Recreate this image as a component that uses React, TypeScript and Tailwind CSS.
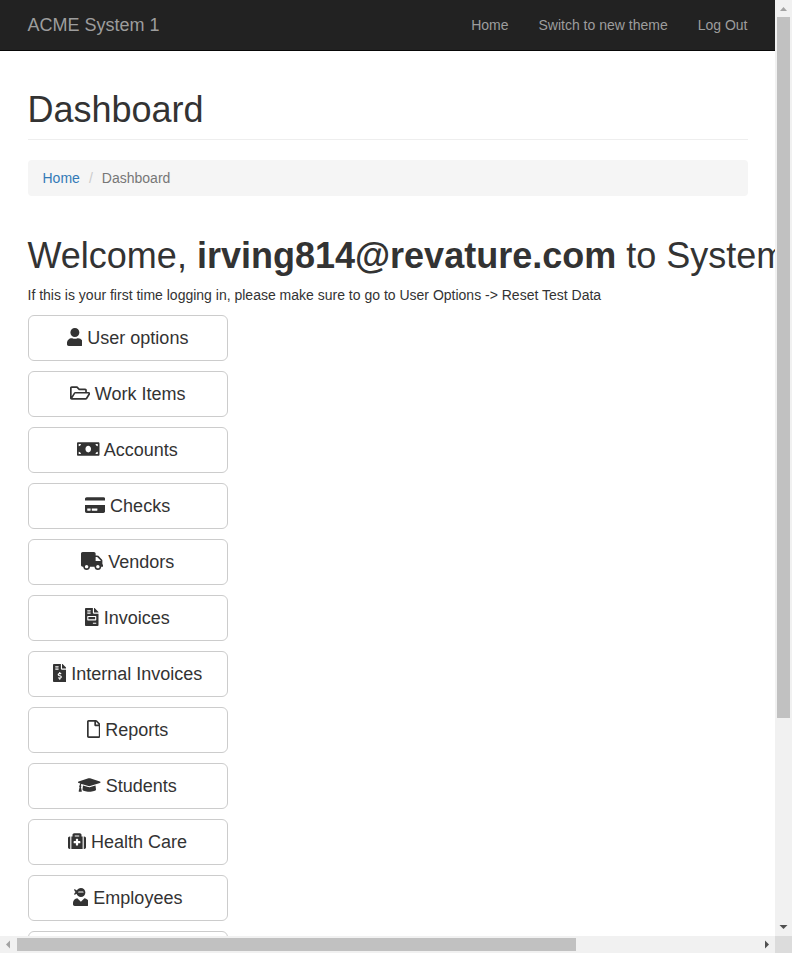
import type { IconType } from "react-icons";
import {
  FaUser,
  FaRegFolderOpen,
  FaMoneyBill,
  FaCreditCard,
  FaTruck,
  FaFileInvoice,
  FaFileInvoiceDollar,
  FaRegFile,
  FaGraduationCap,
  FaMedkit,
  FaUserNinja,
} from "react-icons/fa";

const items: { label: string; icon: IconType; width: string }[] = [
  { label: "User options", icon: FaUser, width: "w-[15.75px]" },
  { label: "Work Items", icon: FaRegFolderOpen, width: "w-[20.25px]" },
  { label: "Accounts", icon: FaMoneyBill, width: "w-[22.5px]" },
  { label: "Checks", icon: FaCreditCard, width: "w-[20.25px]" },
  { label: "Vendors", icon: FaTruck, width: "w-[22.5px]" },
  { label: "Invoices", icon: FaFileInvoice, width: "w-[13.5px]" },
  { label: "Internal Invoices", icon: FaFileInvoiceDollar, width: "w-[13.5px]" },
  { label: "Reports", icon: FaRegFile, width: "w-[13.5px]" },
  { label: "Students", icon: FaGraduationCap, width: "w-[22.5px]" },
  { label: "Health Care", icon: FaMedkit, width: "w-[18px]" },
  { label: "Employees", icon: FaUserNinja, width: "w-[15.75px]" },
];

function Navbar() {
  return (
    <nav className="flex h-[51px] shrink-0 items-center justify-between border-b border-[#080808] bg-[#222] px-[27.5px] text-[#9d9d9d]">
      <a className="text-lg leading-5">ACME System 1</a>
      <div className="flex gap-[30px] leading-5">
        <a>Home</a>
        <a>Switch to new theme</a>
        <a>Log Out</a>
      </div>
    </nav>
  );
}

function VerticalScrollbar() {
  return (
    <div className="flex w-[17px] shrink-0 flex-col items-center bg-[#f1f1f1]">
      <svg className="h-[17px] w-[17px] shrink-0" viewBox="0 0 17 17">
        <path d="M5 11h7L8.500 7z" fill="#a3a3a3" />
      </svg>
      <div className="h-[701px] w-[13px] bg-[#c1c1c1]" />
      <svg className="mt-auto h-[17px] w-[17px] shrink-0" viewBox="0 0 17 17">
        <path d="M4.500 6h8L8.500 10z" fill="#505050" />
      </svg>
    </div>
  );
}

function HorizontalScrollbar() {
  return (
    <div className="flex h-[17px] shrink-0">
      <div className="flex flex-1 items-center bg-[#f1f1f1]">
        <svg className="h-[17px] w-[17px] shrink-0" viewBox="0 0 17 17">
          <path d="M10 4.500v8L6 8.500z" fill="#a3a3a3" />
        </svg>
        <div className="h-[13px] w-[559px] bg-[#c1c1c1]" />
        <svg className="ml-auto h-[17px] w-[17px] shrink-0" viewBox="0 0 17 17">
          <path d="M7 4.500v8L11 8.500z" fill="#505050" />
        </svg>
      </div>
      <div className="w-[17px] bg-[#dcdcdc]" />
    </div>
  );
}

export default function App() {
  return (
    <div className="flex h-[953px] w-[792px] flex-col overflow-hidden bg-white font-['Liberation_Sans',Arial,sans-serif] text-sm leading-5 text-[#333]">
      <div className="flex min-h-0 flex-1">
        <div className="flex min-w-0 flex-1 flex-col overflow-hidden">
          <Navbar />
          <main className="min-h-0 flex-1 overflow-hidden pl-[27.5px] pt-[39.4px]">
            <div className="w-[720px] border-b border-[#eee] pb-[9px]">
              <h1 className="text-[36px] leading-[39.6px]">Dashboard</h1>
            </div>
            <div className="mt-5 flex h-9 w-[720px] items-center rounded bg-[#f5f5f5] px-[15px]">
              <a className="text-[#337ab7]">Home</a>
              <span className="w-[22px] text-center text-[#ccc]">/</span>
              <span className="text-[#777]">Dashboard</span>
            </div>
            <h1 className="mt-10 whitespace-nowrap text-[36px] leading-[39.6px]">
              Welcome, <b>irving814@revature.com</b> to System 1
            </h1>
            <p className="mt-[9.4px]">
              If this is your first time logging in, please make sure to go to User Options -&gt; Reset Test Data
            </p>
            <div className="mt-[10px] flex w-[200px] flex-col gap-[10px]">
              {items.map(({ label, icon: Icon, width }) => (
                <button
                  key={label}
                  className="h-[46px] shrink-0 whitespace-nowrap rounded-md border border-[#ccc] bg-white text-lg leading-6"
                >
                  <Icon className={`inline-block h-[18px] align-[-0.125em] ${width}`} /> {label}
                </button>
              ))}
              <div className="h-[46px] rounded-md border border-[#ccc]" />
            </div>
          </main>
        </div>
        <VerticalScrollbar />
      </div>
      <HorizontalScrollbar />
    </div>
  );
}
